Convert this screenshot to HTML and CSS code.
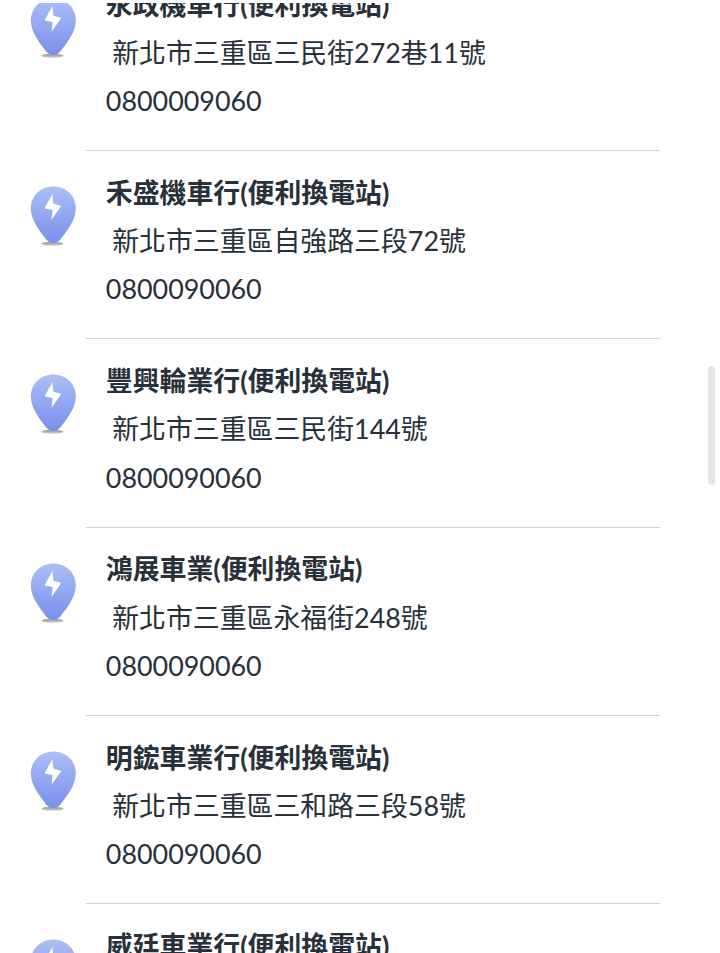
FILE: index.html
```html
<!DOCTYPE html>
<html lang="zh-Hant"><head><meta charset="utf-8"><title>換電站</title><link rel="stylesheet" href="styles.css"></head>
<body>
<svg class="defs" width="0" height="0"><defs>
<linearGradient id="pin-fill" x1="0" y1="0" x2="0" y2="1"><stop offset="0" stop-color="#abbff6"/><stop offset="1" stop-color="#7890ec"/></linearGradient>
<linearGradient id="shade" x1="0" y1="0" x2="0" y2="1"><stop offset="0" stop-color="#999"/><stop offset=".6" stop-color="#b4b4b4"/><stop offset="1" stop-color="#e4e4e4"/></linearGradient>
<symbol id="pin" viewBox="0 0 46 62"><ellipse cx="22.500" cy="57.800" rx="11" ry="2.100" fill="url(#shade)"/><path d="M23.300 .5C10.300 .5 .8 10 .8 22.500C.8 33.500 9 44.500 16 53.200Q19.200 57 23.300 57Q27.300 57 30.500 53.200C37.500 44.500 45.800 33.500 45.800 22.500C45.800 10 36.300 .5 23.300 .5Z" fill="url(#pin-fill)"/><path d="M22.300 8L14.900 21.800Q14.700 22.600 15.700 22.800L22.600 24L21.500 33.800L30.800 20.700Q31.200 19.700 30.200 19.500L23.500 17.800Z" fill="#fff"/></symbol>
</defs></svg>
<main class="list">
<article class="station"><svg class="pin"><use href="#pin"/></svg><div class="info"><h2>永政機車行(便利換電站)</h2><p class="address">新北市三重區三民街272巷11號</p><p>0800009060</p></div></article>
<article class="station"><svg class="pin"><use href="#pin"/></svg><div class="info"><h2>禾盛機車行(便利換電站)</h2><p class="address">新北市三重區自強路三段72號</p><p>0800090060</p></div></article>
<article class="station"><svg class="pin"><use href="#pin"/></svg><div class="info"><h2>豐興輪業行(便利換電站)</h2><p class="address">新北市三重區三民街144號</p><p>0800090060</p></div></article>
<article class="station"><svg class="pin"><use href="#pin"/></svg><div class="info"><h2>鴻展車業(便利換電站)</h2><p class="address">新北市三重區永福街248號</p><p>0800090060</p></div></article>
<article class="station"><svg class="pin"><use href="#pin"/></svg><div class="info"><h2>明鋐車業行(便利換電站)</h2><p class="address">新北市三重區三和路三段58號</p><p>0800090060</p></div></article>
<article class="station"><svg class="pin"><use href="#pin"/></svg><div class="info"><h2>威廷車業行(便利換電站)</h2></div></article>
</main>
<div class="scrollbar"></div>
<div class="top-edge"></div>
</body></html>
```
FILE: styles.css
```css
*{box-sizing:border-box}
body{margin:0;height:953px;overflow:hidden;background:#fff;color:#28303a;font:26.88px/48px Lato,"Noto Sans CJK TC",sans-serif}
.defs{position:absolute}
.list{height:953px;overflow:hidden}
.station{display:flex;height:188.2px}
.station:first-child{margin-top:-37px}
.pin{flex:none;width:46px;height:62px;margin:35px 10px 0 30px}
.info{width:574px;padding:17.9px 0 0 19.8px;border-bottom:1px solid #d3d4d6}
h2,p{margin:0;font-size:26.88px;line-height:48.2px;white-space:nowrap}
h2{font-weight:700}
.address{padding-left:6.4px}
.scrollbar{position:absolute;left:708px;top:366px;width:6.5px;height:119px;border-radius:4px;background:#e6e6e6}
.top-edge{position:absolute;left:0;top:0;width:720px;height:3px;background:#fff}
```
